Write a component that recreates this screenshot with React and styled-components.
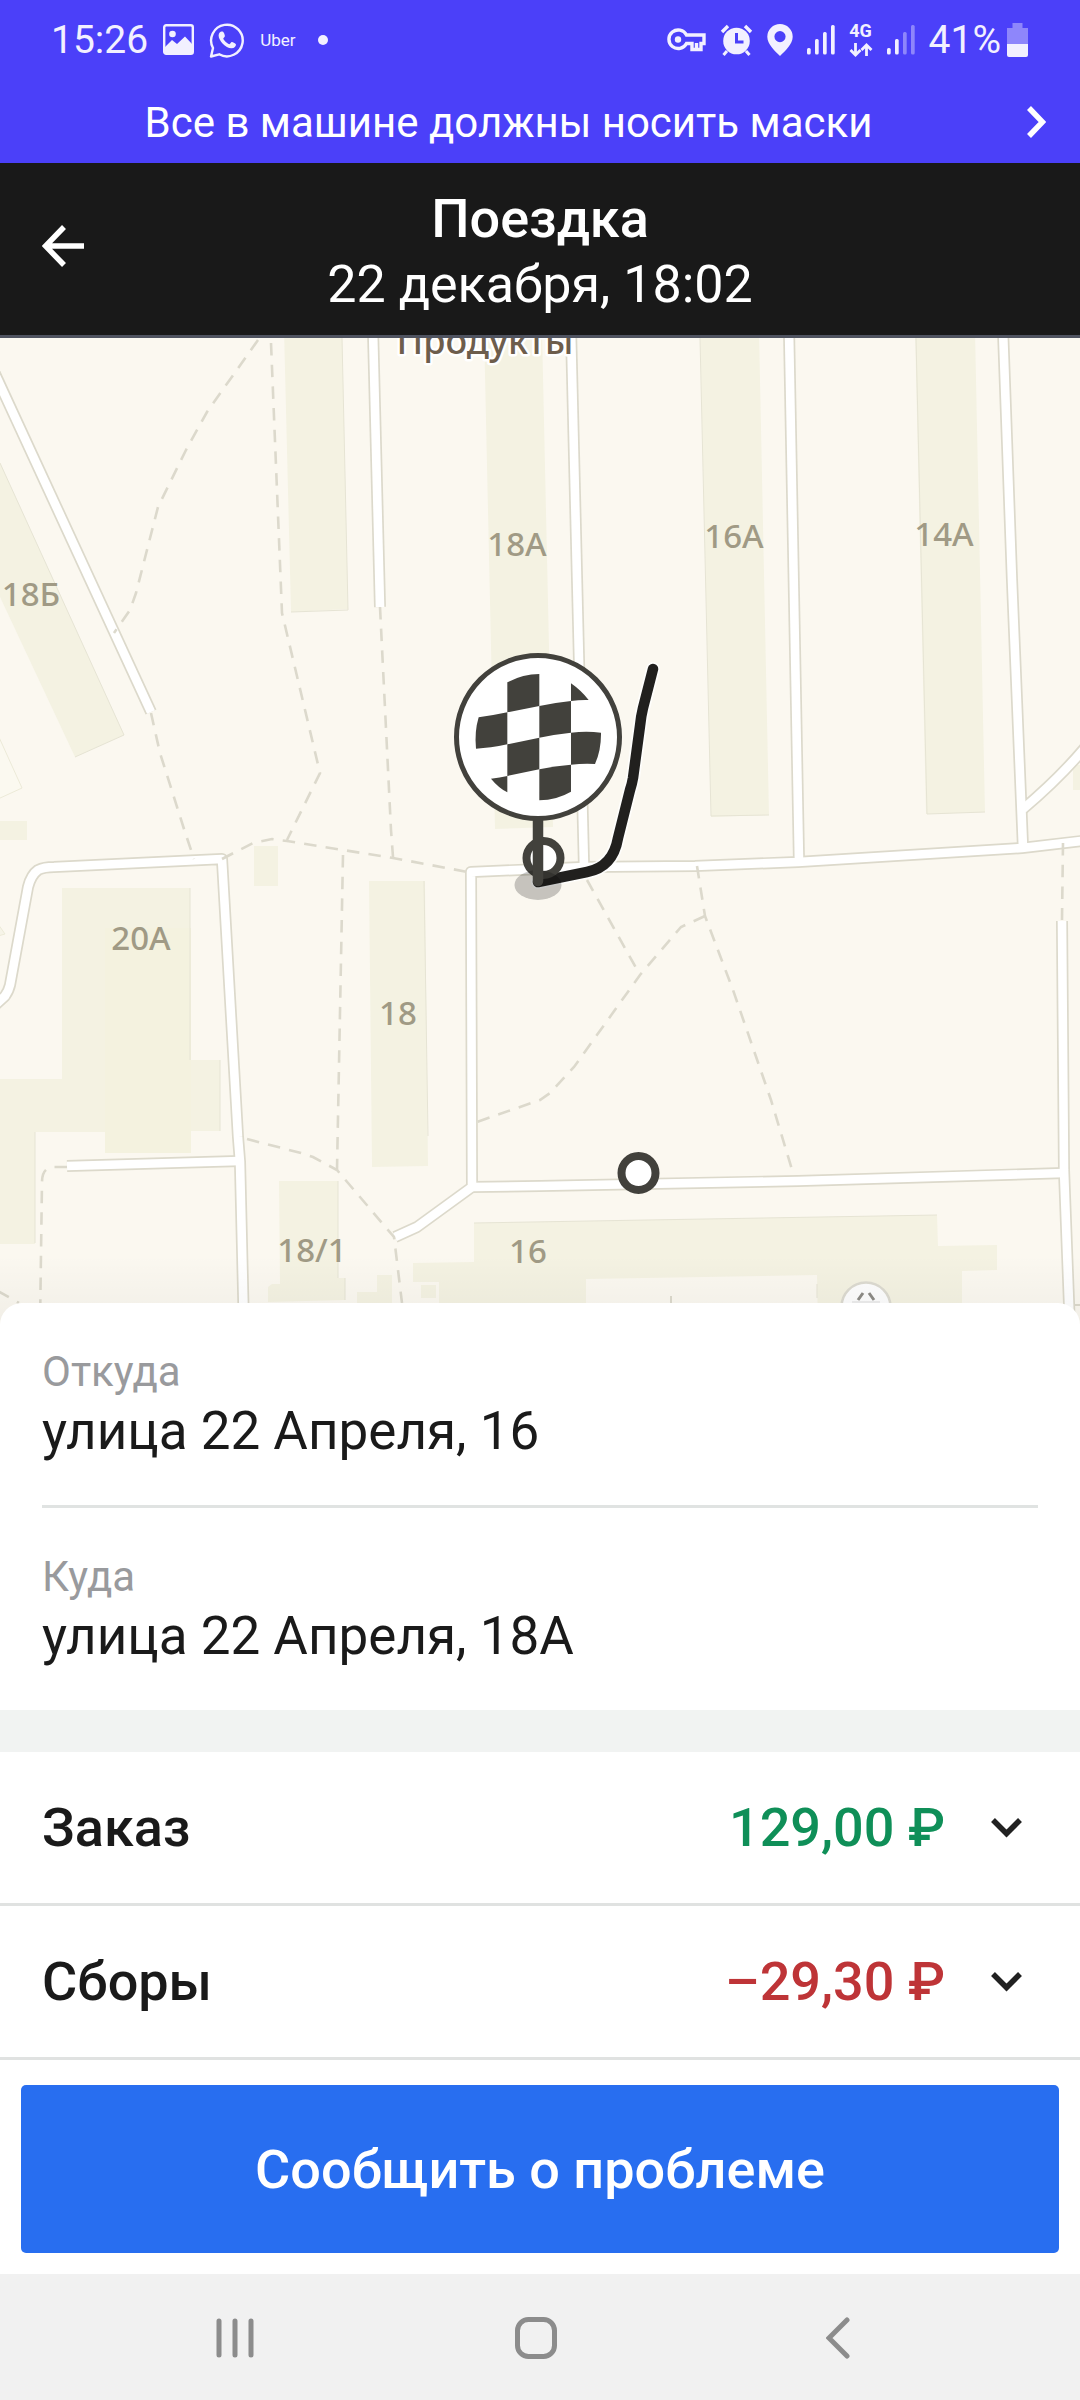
/**
 *
 * Trip details screen
 *
 */

import React, { useState } from 'react';
import styled, { createGlobalStyle } from 'styled-components';

const GlobalStyle = createGlobalStyle`
  *, *::before, *::after {
    box-sizing: border-box;
  }
  body {
    margin: 0;
    background: #fff;
    font-family: Roboto, "Noto Sans", sans-serif;
    color: #1a1a1a;
  }
  button {
    border: 0;
    padding: 0;
    background: none;
    color: inherit;
    font: inherit;
    cursor: pointer;
  }
  svg {
    display: block;
    flex: none;
  }
`;

const Screen = styled.div`
  min-height: 100vh;
  display: flex;
  flex-direction: column;
`;

const TopArea = styled.div`
  background: #4b40f9;
  color: #fff;
`;

const StatusBar = styled.div`
  height: 81px;
  padding: 0 52px 2px 51px;
  display: flex;
  align-items: center;
  justify-content: space-between;
  color: #f2f0ff;
  font-size: 39px;
`;

const StatusGroup = styled.div`
  display: flex;
  align-items: center;
  gap: ${(props) => props.$gap}px;
`;

const AppName = styled.span`
  font-size: 17px;
`;

const Dot = styled.span`
  width: 10px;
  height: 10px;
  margin-left: 8px;
  border-radius: 50%;
  background: currentColor;
`;

const Banner = styled.button`
  width: 100%;
  height: 82px;
  padding-right: 34px;
  display: flex;
  align-items: center;
  gap: 10px;
`;

const BannerText = styled.span`
  flex: 1;
  font-size: 42px;
  text-align: center;
`;

const Header = styled.header`
  padding: 0 42px 6px;
  display: grid;
  grid-template-columns: 42px 1fr 42px;
  align-items: center;
  background: #191919;
  border-bottom: 3px solid #4f5360;
  color: #fff;
`;

const Titles = styled.div`
  padding: 23px 0 11px;
  text-align: center;
  font-size: 52px;
  line-height: 66px;
`;

const Title = styled.h1`
  margin: 0;
  font-size: 54px;
  font-weight: 500;
`;

const MapArea = styled.div`
  flex: 1 1 0;
  min-height: 600px;
  margin-bottom: -22px;
  background: #fbf8f0;

  & > svg {
    width: 100%;
    height: 100%;
  }
`;

const MapLabel = styled.text`
  font-family: "Noto Sans", sans-serif;
  font-size: 33px;
  font-weight: 500;
  fill: #a09a85;
  text-anchor: middle;
`;

const PlaceLabel = styled(MapLabel)`
  font-size: 36px;
  fill: #6d5d4c;
  stroke: #fff;
  stroke-width: 5px;
  stroke-linejoin: round;
  paint-order: stroke;
`;

const Sheet = styled.main`
  position: relative;
  background: #fff;
  border-radius: 22px 22px 0 0;
`;

const Points = styled.dl`
  margin: 0;
  padding: 0 42px;
`;

const Point = styled.div`
  padding: 41px 0 43px;

  & + & {
    border-top: 3px solid #e0e3e2;
  }
`;

const PointLabel = styled.dt`
  font-size: 42px;
  line-height: 56px;
  color: #999a9d;
`;

const Address = styled.dd`
  margin: 0;
  font-size: 53px;
  line-height: 62px;
`;

const Divider = styled.div`
  height: 42px;
  background: #f1f3f2;
`;

const SumRow = styled.button`
  width: 100%;
  height: 154px;
  padding: 0 58px 0 42px;
  display: flex;
  align-items: center;
  border-bottom: 3px solid #e0e2e1;
  font-size: 54px;
  font-weight: 500;
  text-align: left;
`;

const Amount = styled.span`
  margin: 0 46px 0 auto;
  color: ${(props) => (props.$negative ? '#be3437' : '#0f8f58')};
`;

const Footer = styled.footer`
  padding: 25px 21px 21px;
`;

const ReportButton = styled.button`
  width: 100%;
  height: 168px;
  border-radius: 5px;
  background: #286ef0;
  color: #fff;
  font-size: 54px;
  font-weight: 500;
`;

const NavBar = styled.nav`
  height: 126px;
  padding: 2px 91px 0 84px;
  display: grid;
  grid-template-columns: repeat(3, 1fr);
  background: #f1f1f1;
  color: #8c8c8c;
`;

const NavButton = styled.button`
  display: grid;
  place-items: center;
`;

const ROADS = [
  'M-10 363L151 712',
  'M373 330L380 607',
  'M571 330L584 867',
  'M789 330L799 862',
  'M1003 330L1012 580L1023 848',
  'M1023 809Q1062 776 1088 744',
  'M395 1237L417 1227L472 1187V1187L471 872L540 869L584 867L695 866L798 862L1022 848L1090 840',
  'M472 1187L540 1186L798 1181L1064 1173',
  'M1062 921L1064 1170L1070 1330',
  'M-10 1010L5 996Q9 990 10 985L28 887Q31 875 38 870Q44 867 54 867L222 859L238 1137L240 1162L244 1330',
  'M67 1166L240 1161',
];

const PATHS = [
  'M258 340L207 412L186 450L158 507L136 593L130 610L114 633',
  'M271 343L282 613L320 773L287 840',
  'M380 607L391 830L393 857',
  'M151 713L160 753L184 829L194 859',
  'M222 859L253 843L272 839L287 841L393 858L468 872',
  'M343 855L337 1170',
  'M247 1139L301 1153L313 1157L337 1170L394 1237L402 1303',
  'M67 1167H53Q42 1168 42 1182L40 1325',
  'M-2 1291L19 1303',
  'M587 880L640 975',
  'M697 866L705 916L733 990L771 1100L793 1173',
  'M705 916L681 927L640 975L574 1067L550 1093L540 1100L471 1124',
  'M1063 843L1062 920',
];

const BUILDINGS = [
  'M0 463L124 735L75 757L0 597Z',
  'M284 330H342L348 609L291 612Z',
  'M484 330H542L553 827L495 829Z',
  'M700 330H759L769 815L711 817Z',
  'M915 330H975L985 812L926 814Z',
  'M-2 821H27V840H-2Z',
  'M254 846H278V886H254Z',
  'M62 888H190V1060H220V1131H191V1153H105V1132H35V1244H-2V1079H62Z',
  'M369 881H425L428 1166L372 1167Z',
  'M279 1181H338V1278H345V1300L268 1302V1287L272 1284H280Z',
  'M377 1275H392V1303H357V1292H377Z',
  'M421 1285H436V1298H421Z',
  'M474 1223L937 1215L938 1246L997 1245V1270L962 1271V1330H818L817 1275L586 1279V1330H439V1282H413V1263L474 1262Z',
  'M1073 765H1082V790H1073Z',
];

// shaded side of the taller buildings
const WALLS = [
  'M0 463L124 735L75 757',
  'M342 338L348 610L291 612',
  'M700 338L711 816L769 815',
  'M916 338L927 814L985 812',
  'M190 888V1060M220 1060V1131M35 1132V1243',
  'M424 881L428 1136',
  'M338 1181V1278M345 1278V1300',
  'M474 1223L937 1215M817 1284V1298',
];

const LABELS = [
  { text: '18Б', x: 31, y: 606 },
  { text: '18А', x: 517, y: 556 },
  { text: '16А', x: 734, y: 548 },
  { text: '14А', x: 944, y: 546 },
  { text: '20А', x: 141, y: 950 },
  { text: '18', x: 398, y: 1025 },
  { text: '18/1', x: 312, y: 1262 },
  { text: '16', x: 528, y: 1263 },
];

function TripMap() {
  return (
    <svg viewBox="0 338 1080 987" preserveAspectRatio="xMidYMin slice" role="img" aria-label="Маршрут поездки">
      <defs>
        <linearGradient id="sheetShadow" x1="0" y1="0" x2="0" y2="1">
          <stop offset="0" stopColor="#000" stopOpacity="0" />
          <stop offset="1" stopColor="#000" stopOpacity="0.04" />
        </linearGradient>
      </defs>
      <rect y="338" width="1080" height="987" fill="#fbf8f0" />
      <path d="M-2 735L22 788L-2 799Z" fill="#fbf9f0" stroke="#ecead8" />
      <path d="M-2 924L5 934L-2 936Z" fill="#f6f4e8" stroke="#ecead8" />
      <g fill="#f4f2e2">
        {BUILDINGS.map((d) => <path key={d} d={d} />)}
      </g>
      <path d="M105 928H191V1153H105Z" fill="#f4f2df" />
      <g fill="none" stroke="#e6e4d4">
        {WALLS.map((d) => <path key={d} d={d} />)}
      </g>
      <g fill="none" stroke="#dcd9cb" strokeWidth="12" strokeLinejoin="round">
        {ROADS.map((d) => <path key={d} d={d} />)}
      </g>
      <g fill="none" stroke="#fff" strokeWidth="8.6" strokeLinejoin="round">
        {ROADS.map((d) => <path key={d} d={d} />)}
      </g>
      <g fill="none" stroke="#dcd9cc" strokeWidth="2.6" strokeDasharray="12.5 9.2">
        {PATHS.map((d) => <path key={d} d={d} />)}
      </g>
      <path d="M671 1296V1304M1074 1305H1080" stroke="#dcd9cc" strokeWidth="2" />

      {LABELS.map((label) => (
        <MapLabel key={label.text} x={label.x} y={label.y}>{label.text}</MapLabel>
      ))}
      <PlaceLabel x="485" y="354">Продукты</PlaceLabel>

      <circle cx="866" cy="1307" r="24.5" fill="#fdfdfd" stroke="#dcdad0" strokeWidth="2.5" />
      <path d="M858 1300L863 1293M874 1300L869 1293" stroke="#8d8b86" strokeWidth="3" />
      <path d="M852 1302H880" stroke="#ececec" strokeWidth="2" />
      <rect y="1255" width="1080" height="70" fill="url(#sheetShadow)" />

      <Route />
      <circle cx="638.5" cy="1173" r="17" fill="#fff" stroke="#42413c" strokeWidth="8" />
    </svg>
  );
}

function Route() {
  const line = 'M653 669L643 708Q641 716 640 726L633 778Q632 784 630 790L618 838Q613 867 587 872L538 882';
  return (
    <g strokeLinecap="round" strokeLinejoin="round">
      <path d={line} fill="none" stroke="#fff" strokeWidth="14" strokeOpacity="0.8" />
      <path d={line} fill="none" stroke="#21201e" strokeWidth="10.5" />
      <circle cx="543.5" cy="858" r="17" fill="#fff" stroke="#42413c" strokeWidth="8" />
      <ellipse cx="538" cy="885" rx="23.5" ry="15" fill="#000" fillOpacity="0.21" />
      <path d="M538 815V881" stroke="#42413c" strokeWidth="10.5" />
      <circle cx="538" cy="737" r="81.5" fill="#fff" stroke="#42413c" strokeWidth="5" />
      <g transform="translate(430 630) scale(0.3333)" fill="#42413c">
        <path d="M232 157Q278 132 328 132V228L232 247Z" />
        <path d="M423 160Q452 180 476 210Q450 209 423 213Z" />
        <path d="M146 262Q190 256 232 247V343Q180 354 138 356Q133 305 146 262Z" />
        <path d="M328 228Q375 218 423 213V308Q375 313 328 323Z" />
        <path d="M232 343L328 323V418L232 438Z" />
        <path d="M423 308Q470 303 513 308Q514 360 495 402Q460 400 423 404Z" />
        <path d="M328 418Q375 408 423 404V485Q380 510 328 511Z" />
        <path d="M183 446Q210 443 232 438V487Q205 473 183 446Z" />
      </g>
    </g>
  );
}

function PictureIcon() {
  return (
    <svg width="31" height="31" viewBox="0 0 31 31">
      <rect x="1.2" y="1.2" width="28.6" height="28.6" rx="2" fill="none" stroke="currentColor" strokeWidth="2.4" />
      <circle cx="9.5" cy="10" r="3.3" fill="currentColor" />
      <path d="M2 23L9 16L14 20L22 12.5L29 20V29H2Z" fill="currentColor" />
    </svg>
  );
}

function WhatsAppIcon() {
  return (
    <svg width="36" height="36" viewBox="0 0 36 36" fill="none" stroke="currentColor">
      <path d="M2 34.5L4 26A15.8 15.8 0 1 1 10.2 32.3Z" strokeWidth="2.4" strokeLinejoin="round" />
      <path d="M12.6 9.5C11.5 9.5 9.6 11 9.6 13.5C9.6 18.5 16.5 26.3 22.5 26.3C25.5 26.3 27 24 27 22.5C27 21.6 23.5 20 22.8 20C22 20 21.3 22.2 20.4 22.2C19 22.2 14.3 18 14.3 16.5C14.3 15.7 15.9 15 15.9 13.9C15.9 13 14.6 9.5 13.6 9.5Z" fill="currentColor" stroke="none" />
    </svg>
  );
}

function KeyIcon() {
  return (
    <svg width="39" height="24" viewBox="0 0 39 24" fill="none" stroke="currentColor" strokeWidth="3.4">
      <path d="M19.5 7H37V15.5H34V21.5H25V15.5H19.5A9.3 9.3 0 1 1 19.5 7Z" />
      <path d="M29.5 15V21" />
      <circle cx="11" cy="11.5" r="3.2" fill="currentColor" stroke="none" />
    </svg>
  );
}

function AlarmIcon() {
  return (
    <svg width="33" height="32" viewBox="0 0 33 32" fill="none" stroke="currentColor">
      <circle cx="16.5" cy="17" r="13.3" fill="currentColor" stroke="none" />
      <path d="M2 8L8 2M31 8L25 2" strokeWidth="3.4" />
      <path d="M7 27L3.5 31M26 27L29.5 31" strokeWidth="3" />
      <path d="M16.5 9V18H23.5" stroke="#4b40f9" strokeWidth="3" />
    </svg>
  );
}

function PinIcon() {
  return (
    <svg width="26" height="32" viewBox="0 0 26 32">
      <path fillRule="evenodd" fill="currentColor" d="M13 0A12.7 12.7 0 0 1 25.7 12.7C25.7 20 18 27 13 32C8 27 .3 20 .3 12.7A12.7 12.7 0 0 1 13 0ZM13 7A5.6 5.6 0 1 0 13 18.2A5.6 5.6 0 1 0 13 7Z" />
    </svg>
  );
}

function SignalIcon({ level }) {
  const tops = [24, 15, 8, 1];
  return (
    <svg width="28" height="31" viewBox="0 0 28 31" fill="currentColor">
      {tops.map((top, i) => (
        <rect key={top} x={i * 8} y={top} width="3.7" height={30.5 - top} rx="1.5" opacity={i < level ? 1 : 0.4} />
      ))}
    </svg>
  );
}

const Network = styled.span`
  display: flex;
  flex-direction: column;
  align-items: center;
  gap: 4px;
  font-size: 18px;
  font-weight: 700;
  line-height: 16px;
`;

function DataIcon() {
  return (
    <svg width="24" height="14" viewBox="0 0 24 14" fill="none" stroke="currentColor" strokeWidth="2.8">
      <path d="M6.5 0V12M1.5 7L6.500 12L11.5 7" />
      <path d="M17.5 13V2M12.5 7L17.5 2L22.5 7" />
    </svg>
  );
}

function BatteryIcon() {
  return (
    <svg width="21" height="34" viewBox="0 0 21 34" fill="currentColor">
      <path d="M5.5 0H15.5V5H21V21H0V5H5.5Z" opacity="0.4" />
      <path d="M0 21H21V32Q21 34 19 34H2Q0 34 0 32Z" />
    </svg>
  );
}

function ChevronDown() {
  return (
    <svg width="31" height="20" viewBox="0 0 31 20" fill="none" stroke="#212121" strokeWidth="5.5">
      <path d="M2 2L15.5 15.5L29 2" />
    </svg>
  );
}

function CollapsibleSum(props) {
  const { label, value, negative } = props;
  const [open, setOpen] = useState(false);
  return (
    <SumRow type="button" aria-expanded={open} onClick={() => setOpen(!open)}>
      <span>{label}</span>
      <Amount $negative={negative}>{value}</Amount>
      <ChevronDown />
    </SumRow>
  );
}

function App() {
  return (
    <Screen>
      <GlobalStyle />
      <TopArea>
        <StatusBar>
          <StatusGroup $gap={15}>
            <span>15:26</span>
            <PictureIcon />
            <WhatsAppIcon />
            <AppName>Uber</AppName>
            <Dot />
          </StatusGroup>
          <StatusGroup $gap={14}>
            <KeyIcon />
            <AlarmIcon />
            <PinIcon />
            <SignalIcon level={4} />
            <Network>
              4G
              <DataIcon />
            </Network>
            <SignalIcon level={2} />
            <StatusGroup $gap={6}>
              <span>41%</span>
              <BatteryIcon />
            </StatusGroup>
          </StatusGroup>
        </StatusBar>
        <Banner type="button">
          <BannerText>Все в машине должны носить маски</BannerText>
          <svg width="19" height="32" viewBox="0 0 19 32" fill="none" stroke="#fff" strokeWidth="5.5">
            <path d="M2 2L15.5 16L2 30" />
          </svg>
        </Banner>
      </TopArea>
      <Header>
        <button type="button" aria-label="Назад">
          <svg width="42" height="42" viewBox="0 0 42 42" fill="none" stroke="#fff" strokeWidth="5.5">
            <path d="M22 2L3.5 21L22 40M4 21H42" />
          </svg>
        </button>
        <Titles>
          <Title>Поездка</Title>
          22 декабря, 18:02
        </Titles>
      </Header>
      <MapArea>
        <TripMap />
      </MapArea>
      <Sheet>
        <Points>
          <Point>
            <PointLabel>Откуда</PointLabel>
            <Address>улица 22 Апреля, 16</Address>
          </Point>
          <Point>
            <PointLabel>Куда</PointLabel>
            <Address>улица 22 Апреля, 18А</Address>
          </Point>
        </Points>
        <Divider />
        <CollapsibleSum label="Заказ" value="129,00 ₽" />
        <CollapsibleSum label="Сборы" value="–29,30 ₽" negative />
        <Footer>
          <ReportButton type="button">Сообщить о проблеме</ReportButton>
        </Footer>
      </Sheet>
      <NavBar>
        <NavButton type="button" aria-label="Недавние">
          <svg width="38" height="42" viewBox="0 0 38 42" stroke="currentColor" strokeWidth="5" strokeLinecap="round">
            <path d="M3 4V38M19 4V38M35 4V38" />
          </svg>
        </NavButton>
        <NavButton type="button" aria-label="Домой">
          <svg width="42" height="42" viewBox="0 0 42 42" fill="none" stroke="currentColor" strokeWidth="5">
            <rect x="2.5" y="2.5" width="37" height="37" rx="11" />
          </svg>
        </NavButton>
        <NavButton type="button" aria-label="Назад">
          <svg width="24" height="42" viewBox="0 0 24 42" fill="none" stroke="currentColor" strokeWidth="5" strokeLinecap="round">
            <path d="M21 3L3 21L21 39" />
          </svg>
        </NavButton>
      </NavBar>
    </Screen>
  );
}

export default App;
